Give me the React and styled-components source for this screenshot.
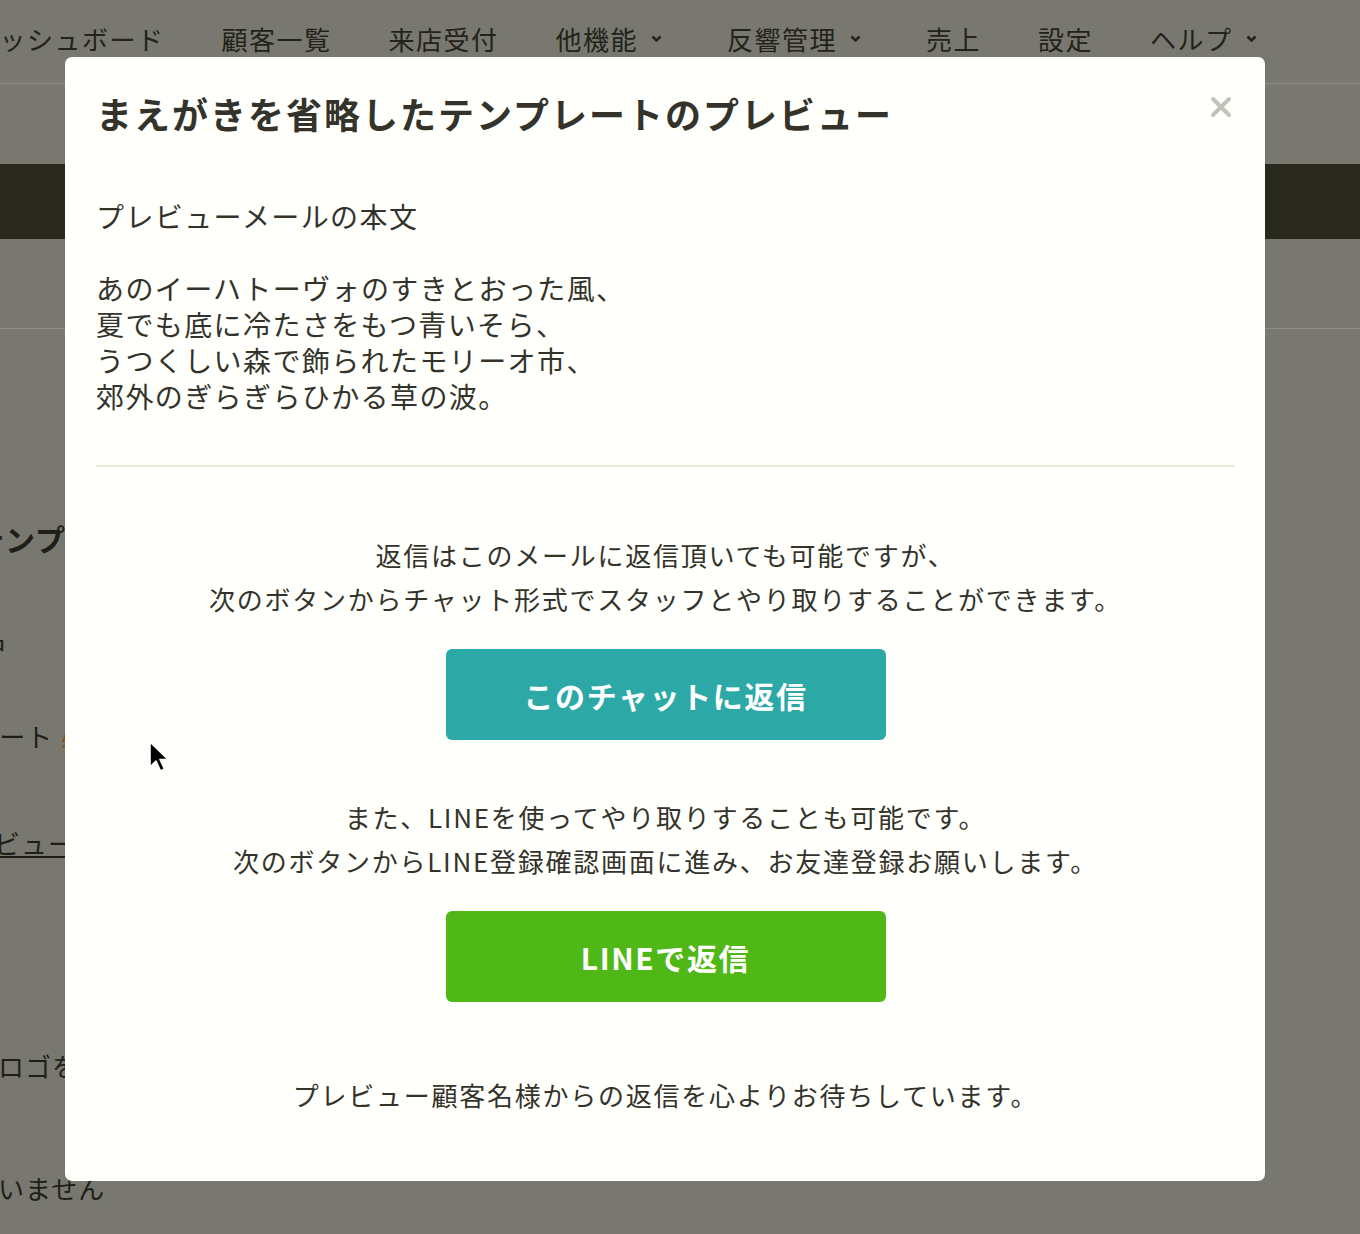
import React from "react";
import styled, { createGlobalStyle } from "styled-components";

const Global = createGlobalStyle`
  html, body { margin: 0; padding: 0; }
  body {
    width: 1360px;
    height: 1234px;
    overflow: hidden;
    background: #787870;
    font-family: "Noto Sans CJK JP", "Noto Sans", sans-serif;
  }
`;

const Page = styled.div`
  position: relative;
  width: 1360px;
  height: 1234px;
  overflow: hidden;
  background: #787870;
  color: #1f1f18;
`;

const Nav = styled.nav`
  height: 84px;
  border-bottom: 1px solid #8e8e86;
  display: flex;
  align-items: center;
  gap: 57px;
  margin-left: -28px;
  padding-bottom: 6px;
  box-sizing: border-box;
`;

const NavItem = styled.div`
  display: flex;
  align-items: center;
  gap: 13px;
  font-size: 26px;
  letter-spacing: 1.5px;
  white-space: nowrap;
  color: #232319;
`;

const ChevronWrap = styled.span`
  display: flex;
  margin-right: 8px;
`;

const SubBar = styled.div`
  height: 80px;
`;

const DarkBand = styled.div`
  height: 75px;
  background: #28281d;
`;

const Crumb = styled.div`
  height: 89px;
  border-bottom: 1px solid #8e8e86;
`;

const Content = styled.div`
  display: flex;
  flex-direction: column;
`;

const BgLine = styled.div`
  margin-left: ${(p) => p.$shift}px;
  margin-top: ${(p) => p.$top}px;
  font-size: ${(p) => (p.$bold ? 30 : 26)}px;
  font-weight: ${(p) => (p.$bold ? 700 : 400)};
  letter-spacing: 1px;
  line-height: 40px;
  white-space: nowrap;
  color: #1f1f18;
  text-decoration: ${(p) => (p.$link ? "underline" : "none")};
`;

const Orange = styled.span`
  color: #8a4a12;
  margin-left: 8px;
`;

const Overlay = styled.div`
  position: absolute;
  inset: 0;
  padding: 57px 0 0 65px;
  box-sizing: border-box;
`;

const Modal = styled.div`
  width: 1200px;
  height: 1124px;
  box-sizing: border-box;
  background: #fffffb;
  border-radius: 7px;
  padding: 35px 30px 0 31px;
  color: #33332c;
`;

const Header = styled.div`
  display: flex;
  justify-content: space-between;
  align-items: flex-start;
`;

const Title = styled.h1`
  margin: 0;
  font-size: 36px;
  font-weight: 700;
  letter-spacing: 2px;
  line-height: 42px;
`;

const Close = styled.button`
  border: none;
  background: none;
  padding: 0;
  margin: 4px 2px 0 0;
  width: 24px;
  height: 24px;
  cursor: pointer;
`;

const Body = styled.div`
  margin-top: 64px;
  font-size: 28px;
  letter-spacing: 1.4px;
  line-height: 36px;
  white-space: pre-wrap;
`;

const Divider = styled.hr`
  margin: 51px 0 0 0;
  border: none;
  height: 2px;
  background: #ecebd6;
`;

const Center = styled.div`
  display: flex;
  flex-direction: column;
  align-items: center;
  text-align: center;
`;

const Note = styled.p`
  margin: ${(p) => p.$top}px 0 0 0;
  font-size: 26px;
  letter-spacing: 1.75px;
  line-height: 44px;
  white-space: pre-line;
`;

const ActionButton = styled.button`
  margin-top: 28px;
  width: 440px;
  height: 91px;
  border: none;
  border-radius: 6px;
  background: ${(p) => p.$bg};
  color: #ffffff;
  font-family: "Noto Sans CJK JP", "Noto Sans", sans-serif;
  font-size: 30px;
  font-weight: 700;
  letter-spacing: 1.6px;
  cursor: pointer;
`;

const Cursor = styled.svg`
  position: absolute;
  left: 148px;
  top: 740px;
`;

const Chevron = () => (
  <ChevronWrap>
    <svg width="11" height="8" viewBox="0 0 11 8">
      <path d="M1.5 1.5 L5.5 5.5 L9.5 1.5" fill="none" stroke="#232319" strokeWidth="2.6" />
    </svg>
  </ChevronWrap>
);

const navItems = [
  { t: "ダッシュボード" },
  { t: "顧客一覧" },
  { t: "来店受付" },
  { t: "他機能", c: true },
  { t: "反響管理", c: true },
  { t: "売上" },
  { t: "設定" },
  { t: "ヘルプ", c: true },
];

const poem = `プレビューメールの本文

あのイーハトーヴォのすきとおった風、
夏でも底に冷たさをもつ青いそら、
うつくしい森で飾られたモリーオ市、
郊外のぎらぎらひかる草の波。`;

export default function App() {
  return (
    <>
      <Global />
      <Page>
        <Nav>
          {navItems.map((n) => (
            <NavItem key={n.t}>
              {n.t}
              {n.c && <Chevron />}
            </NavItem>
          ))}
        </Nav>
        <SubBar />
        <DarkBand />
        <Crumb />
        <Content>
          <BgLine $bold $shift={-26} $top={189}>テンプレート設定</BgLine>
          <BgLine $shift={-47} $top={60}>件名</BgLine>
          <BgLine $shift={-108} $top={58}>テンプレート<Orange>必須</Orange></BgLine>
          <BgLine $link $shift={-60} $top={67}>プレビュー</BgLine>
          <BgLine $shift={-2} $top={183}>ロゴを表示</BgLine>
          <BgLine $shift={-2} $top={82}>いません</BgLine>
        </Content>
        <Overlay>
          <Modal>
            <Header>
              <Title>まえがきを省略したテンプレートのプレビュー</Title>
              <Close aria-label="close">
                <svg width="22" height="22" viewBox="0 0 22 22">
                  <path d="M3 3 L19 19 M19 3 L3 19" stroke="#c2c2bb" strokeWidth="4" strokeLinecap="round" />
                </svg>
              </Close>
            </Header>
            <Body>{poem}</Body>
            <Divider />
            <Center>
              <Note $top={66}>{"返信はこのメールに返信頂いても可能ですが、\n次のボタンからチャット形式でスタッフとやり取りすることができます。"}</Note>
              <ActionButton $bg="#2ca9a7">このチャットに返信</ActionButton>
              <Note $top={55}>{"また、LINEを使ってやり取りすることも可能です。\n次のボタンからLINE登録確認画面に進み、お友達登録お願いします。"}</Note>
              <ActionButton $bg="#4fb816">LINEで返信</ActionButton>
              <Note $top={71}>プレビュー顧客名様からの返信を心よりお待ちしています。</Note>
            </Center>
          </Modal>
        </Overlay>
        <Cursor width="26" height="36" viewBox="0 0 26 36">
          <path d="M2 2 L2 27 L8 21 L12.5 31 L16.5 29 L12 19.5 L20 19.5 Z" fill="#000" stroke="#fff" strokeWidth="1.6" strokeLinejoin="round" />
        </Cursor>
      </Page>
    </>
  );
}
